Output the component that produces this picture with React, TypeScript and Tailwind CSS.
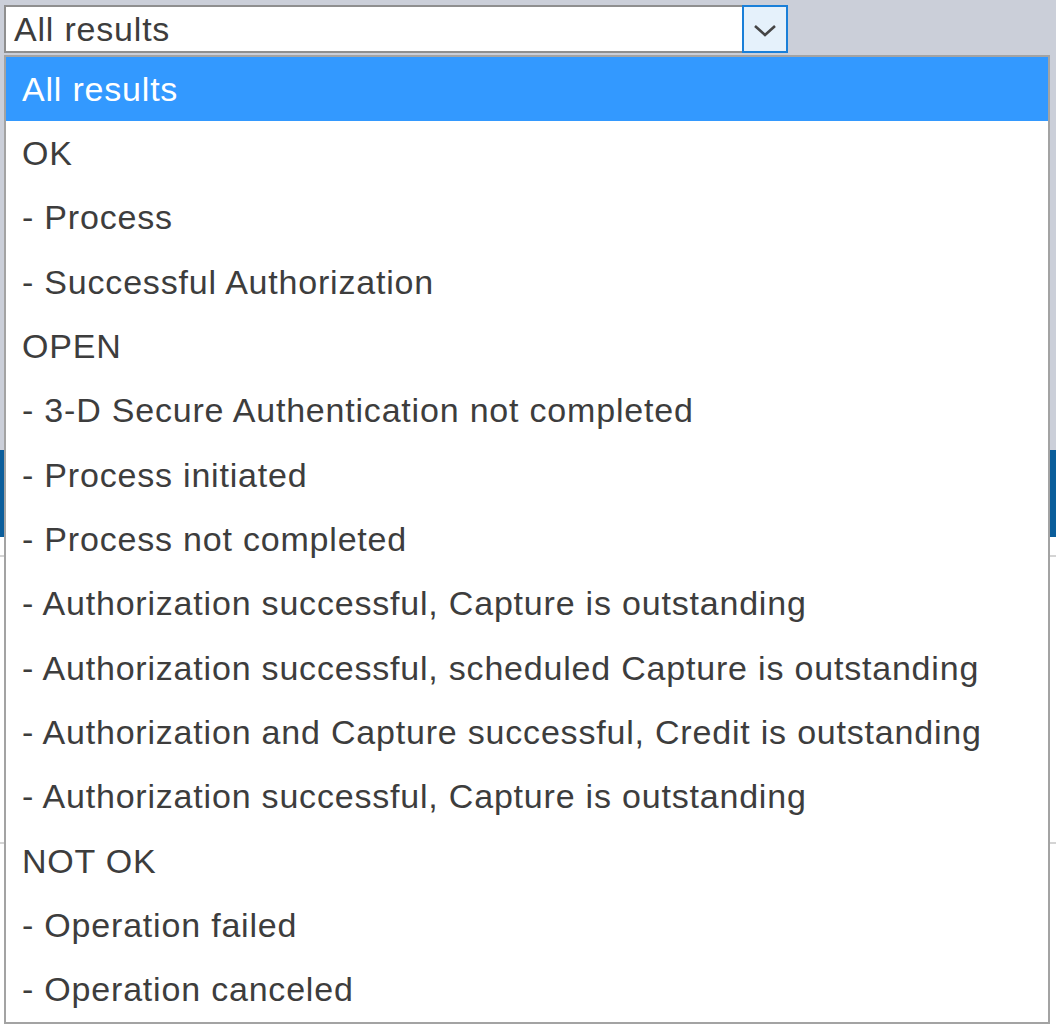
const options = [
  "All results",
  "OK",
  "- Process",
  "- Successful Authorization",
  "OPEN",
  "- 3-D Secure Authentication not completed",
  "- Process initiated",
  "- Process not completed",
  "- Authorization successful, Capture is outstanding",
  "- Authorization successful, scheduled Capture is outstanding",
  "- Authorization and Capture successful, Credit is outstanding",
  "- Authorization successful, Capture is outstanding",
  "NOT OK",
  "- Operation failed",
  "- Operation canceled",
];

export default function App() {
  const selected = 0;

  return (
    <div
      className="relative w-[1056px] h-[1031px] overflow-hidden bg-white"
      style={{ fontFamily: '"Liberation Sans", Arial, sans-serif' }}
    >
      {/* page behind the open list */}
      <div className="flex flex-col h-full">
        <div className="h-[450px] bg-[#cbcfd9] pt-[5px] pl-[4px]">
          <div className="flex w-[784px] h-[48px]">
            <div className="flex-1 flex items-center bg-white border-2 border-[#8f8f8f] border-r-0 pl-[8px] text-[34px] tracking-[0.8px] text-[#3d3d3d]">
              All results
            </div>
            <div className="w-[46px] flex items-center justify-center bg-[#e5f1fb] border-2 border-[#1a7fd8]">
              <svg width="24" height="14" viewBox="0 0 24 14" className="mt-[4px]">
                <polyline points="2,2 12,11 22,2" fill="none" stroke="#454545" strokeWidth="2.6" />
              </svg>
            </div>
          </div>
        </div>
        <div className="h-[87px] bg-[#0b5e9b]" />
        <div className="h-[18px]" />
        <div className="h-[287px] border-t-2 border-[#d4d4d4]" />
        <div className="flex-1 border-t-2 border-[#d4d4d4]" />
      </div>

      {/* open dropdown list */}
      <ul className="absolute left-[4px] top-[55px] w-[1046px] bg-white border-2 border-[#a3a3a3] text-[34px] tracking-[0.8px] text-[#3d3d3d]">
        {options.map((o, i) => (
          <li
            key={i}
            className={
              "h-[64.33px] flex items-center pl-[16px] whitespace-nowrap " +
              (i === selected ? "bg-[#3399ff] text-white" : "")
            }
          >
            {o}
          </li>
        ))}
      </ul>
    </div>
  );
}
